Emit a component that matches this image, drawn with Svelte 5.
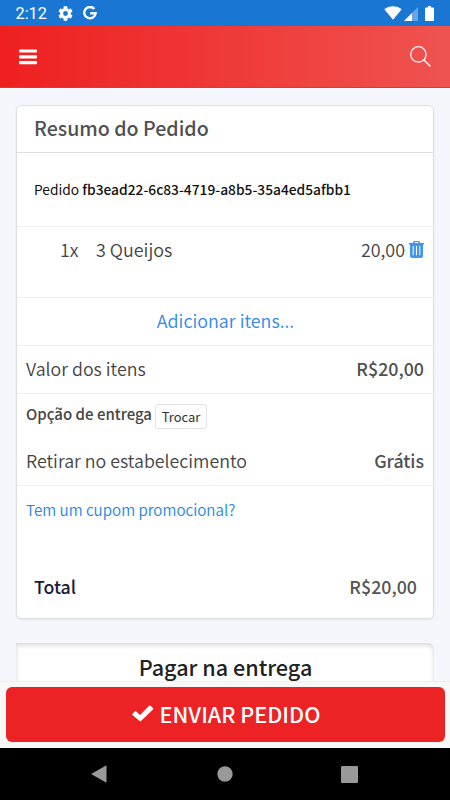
<script>
  const orderId = 'fb3ead22-6c83-4719-a8b5-35a4ed5afbb1';
  const items = [{ qty: 1, name: '3 Queijos', price: '20,00' }];
</script>

<div class="screen">
  <div class="status">
    <span class="time">2:12</span>
    <svg class="gear" width="15" height="15" viewBox="2 2 20 20"><path fill="#fff" d="M19.14 12.94c.04-.3.06-.61.06-.94s-.02-.64-.07-.94l2.03-1.58a.49.49 0 0 0 .12-.61l-1.92-3.32a.49.49 0 0 0-.59-.22l-2.39.96c-.5-.38-1.03-.7-1.62-.94l-.36-2.54A.48.48 0 0 0 13.92 2.400h-3.84c-.24 0-.43.17-.47.41l-.36 2.54c-.59.24-1.13.57-1.62.94l-2.39-.96a.48.48 0 0 0-.59.22L2.740 8.870c-.12.21-.08.47.12.61l2.03 1.580c-.05.3-.09.63-.09.94s.02.64.07.94l-2.030 1.580a.49.49 0 0 0-.12.610l1.920 3.320c.12.22.37.29.59.22l2.390-.96c.5.38 1.030.7 1.620.94l.36 2.540c.05.24.24.41.48.41h3.840c.24 0 .44-.17.47-.41l.36-2.540c.59-.24 1.130-.56 1.620-.94l2.390.96c.22.08.47 0 .59-.22l1.920-3.320a.48.48 0 0 0-.12-.61zM12 15.200a3.200 3.200 0 1 1 0-6.400 3.200 3.200 0 0 1 0 6.400z"/></svg>
    <svg class="google" width="14" height="14" viewBox="0 0 14 14"><path fill="none" stroke="#fff" stroke-width="2.400" d="M11.300 3A5.700 5.700 0 1 0 12.600 7.300H7.200"/></svg>
    <div class="signals">
      <svg width="18" height="14" viewBox="0 0 18 14"><path fill="#fff" d="M.3 3.300C5-.7 13-.7 17.700 3.300L9 13.700z"/></svg>
      <svg class="cell" width="14" height="14" viewBox="0 0 14 14"><path fill="#fff" fill-opacity=".35" d="M14 0v14H0z"/><path fill="#fff" d="M8 6v8H0z"/></svg>
      <svg class="battery" width="9" height="15" viewBox="0 0 9 15"><path fill="#fff" d="M3 0h3v1.500h2q1 0 1 1V14q0 1-1 1H1q-1 0-1-1V2.500q0-1 1-1h2z"/></svg>
    </div>
  </div>

  <header>
    <svg width="18" height="16" viewBox="0 0 18 16"><g fill="#fff"><rect y=".4" width="18" height="3.200" rx="1"/><rect y="6.200" width="18" height="3.200" rx="1"/><rect y="12" width="18" height="3.200" rx="1"/></g></svg>
    <svg class="search" width="21" height="21" viewBox="0 0 21 21"><g fill="none" stroke="#fff" stroke-width="1.200" stroke-linecap="round"><circle cx="8.400" cy="8.400" r="7.700"/><path d="M14 14l6 6"/></g></svg>
  </header>

  <main>
    <section class="card">
      <h2><span>Resumo do Pedido</span></h2>
      <div class="order"><span class="oid">Pedido <b>{orderId}</b></span></div>
      {#each items as item}
        <div class="item">
          <span class="qty">{item.qty}x</span>
          <span class="name">{item.name}</span>
          <span class="price">{item.price}</span>
          <svg width="15" height="17" viewBox="0 0 15 17"><path fill="#4295ea" fill-rule="evenodd" d="M0 1.900h3.600l.8-1.300Q4.800 0 5.500 0h4q.7 0 1.100.6l.8 1.300H15v1.700h-1V15q0 2-2 2H3q-2 0-2-2V3.600H0zM5.500 1.900h4l-.5-.8H6zM3.700 5v9.300h1V5zM7 5v9.300h1V5zM10.300 5v9.300h1V5z"/></svg>
        </div>
      {/each}
      <div class="add"><span>Adicionar itens...</span></div>
      <div class="line"><span class="label">Valor dos itens</span><span class="value">R$20,00</span></div>
      <div class="delivery">
        <div class="option"><span class="opt">Opção de entrega</span><button class="swap">Trocar</button></div>
        <div class="pickup"><span class="label">Retirar no estabelecimento</span><span class="value">Grátis</span></div>
      </div>
      <div class="coupon"><span>Tem um cupom promocional?</span></div>
      <div class="total"><span class="tl">Total</span><span class="tv">R$20,00</span></div>
    </section>
    <section class="pay"><span>Pagar na entrega</span></section>
  </main>

  <footer>
    <button class="send">
      <svg width="22" height="17" viewBox="0 0 22 17"><path fill="#fff" d="M.5 8.700l2.200-2.300q.7-.7 1.400 0l4 3.700L17.200.8q.7-.7 1.400 0l2.300 2.200q.7.700 0 1.400L9 16.100q-.8.700-1.500 0L.5 10.100q-.7-.7 0-1.400z"/></svg>
      <span>ENVIAR PEDIDO</span>
    </button>
  </footer>

  <nav>
    <svg width="16" height="18" viewBox="0 0 16 18"><path fill="#999" d="M15.500.7v16.600q0 .5-.5.200L.5 9.300q-.4-.3 0-.6L15 .5q.5-.2.500.2z"/></svg>
    <svg width="16" height="16" viewBox="0 0 16 16"><circle cx="8" cy="8" r="7.700" fill="#999"/></svg>
    <svg width="17" height="17" viewBox="0 0 17 17"><rect width="17" height="17" rx="1" fill="#999"/></svg>
  </nav>
</div>

<style>
  :global(body) { margin: 0; }
  .screen { width: 450px; height: 800px; display: flex; flex-direction: column; overflow: hidden; background: #f5f6fb; font-family: "Noto Sans CJK SC", "Noto Sans", sans-serif; color: #444; }
  .screen * { box-sizing: border-box; }
  span { white-space: nowrap; }
  .status { flex: none; height: 26px; background: #1976d2; display: flex; align-items: center; padding: 0 8px 0 15px; color: #fff; }
  .time { font: 400 16.300px/26px Roboto, sans-serif; width: 43px; padding: 1px 0 0 .5px; }
  .google { margin-left: 10px; }
  .signals { margin-left: auto; margin-right: 1px; display: flex; align-items: center; }
  .cell { margin-left: 2px; margin-top: 1px; }
  .battery { margin: 0 7px 0 7px; }
  header { flex: none; height: 62px; background: linear-gradient(90deg, #ee2020, #ef5350); border-bottom: 1px solid #e93338; display: flex; justify-content: space-between; align-items: center; padding: 1px 19px 0 19px; }
  .search { margin-bottom: 2px; }
  main { flex: 1; min-height: 0; overflow: hidden; padding: 17px 16px 0; }
  .card { height: 514px; background: #fff; border: 1px solid #dedfe1; border-radius: 5px; box-shadow: 0 1px 2px #0001; display: flex; flex-direction: column; }
  h2 { margin: 0; height: 47px; border-bottom: 1px solid #dedfe1; padding-left: 17px; font-size: 19.600px; font-weight: 500; line-height: 44px; color: #505050; }
  .order { height: 74px; border-bottom: 1px solid #eee; padding-left: 17px; font-size: 13.780px; line-height: 73px; color: #111; }
  b { font-weight: 500; }
  .item { height: 71px; border-bottom: 1px solid #eee; display: flex; padding: 8px 9px 0 43px; line-height: 28px; font-size: 17.900px; font-weight: 350; }
  .name { margin-left: 17.500px; }
  .price { margin-left: auto; }
  .item svg { margin: 6px 0 0 4px; }
  .add { height: 48px; border-bottom: 1px solid #eee; text-align: center; font-size: 17.900px; font-weight: 350; line-height: 45px; color: #3088e8; padding-left: 1px; }
  .line { height: 48px; border-bottom: 1px solid #eee; display: flex; justify-content: space-between; padding: 0 9px; line-height: 45px; font-size: 17.800px; }
  .label { font-weight: 350; }
  .value { font-weight: 500; color: #505050; }
  .delivery { height: 92px; border-bottom: 1px solid #eee; padding: 0 9px; }
  .option { display: flex; padding-top: 10px; height: 43px; }
  .opt { font-size: 15px; font-weight: 500; line-height: 20px; }
  .swap { margin-left: 3px; height: 25px; width: 52px; border: 1px solid #e3e3e3; border-radius: 3px; background: #fff; color: #333; font: 13px/20px "Noto Sans CJK SC", sans-serif; padding: 0; }
  .pickup { display: flex; justify-content: space-between; font-size: 17.800px; line-height: 46px; }
  .coupon { padding: 11px 9px 0; height: 77px; font-size: 15.150px; font-weight: 350; line-height: 24px; color: #2584e5; }
  .total { display: flex; justify-content: space-between; padding: 0 16px 0 17px; line-height: 46px; font-size: 17.800px; font-weight: 500; }
  .tl { color: #1b1b3a; }
  .tv { color: #555; }
  .pay { margin-top: 24px; height: 80px; background: #fff; border-radius: 0 6px 0 0; box-shadow: inset 0 2px 5px #0000002b; text-align: center; font-size: 21.600px; font-weight: 500; line-height: 48px; color: #222; padding-left: 1px; }
  footer { flex: none; height: 67px; background: #f8f8f8; border-top: 1px solid #eee; padding: 5px 5px 0 6px; }
  .send { width: 439px; height: 55px; border: 0; border-radius: 6px; background: #ed2224; color: #fff; display: flex; align-items: center; justify-content: center; gap: 6px; font: 500 21.600px/52px "Noto Sans CJK SC", sans-serif; padding: 0 0 2px 1px; }
  .send svg { margin-bottom: 1px; }
  nav { flex: none; height: 52px; background: #000; display: flex; justify-content: space-between; align-items: center; padding: 0 92px 0 91px; }
  nav svg:nth-child(2) { margin-left: 1px; }
</style>
